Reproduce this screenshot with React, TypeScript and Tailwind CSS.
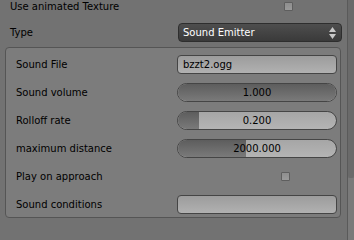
type SliderProps = {
  value: string;
  fill: number;
};

const font = { fontFamily: '"DejaVu Sans", Verdana, sans-serif' };

function Checkbox() {
  return (
    <div className="h-[9px] w-[9px] rounded-[1px] border border-[#5e5e5e] bg-gradient-to-b from-[#8e8e8e] to-[#9a9a9a]" />
  );
}

function NumSlider({ value, fill }: SliderProps) {
  return (
    <div className="relative h-[19px] w-[160px] overflow-hidden rounded-full border border-[#454545] bg-gradient-to-b from-[#a6a6a6] to-[#b4b4b4]">
      <div
        className="absolute inset-y-0 left-0 bg-gradient-to-b from-[#5d5d5d] to-[#7a7a7a]"
        style={{ width: `${fill}%` }}
      />
      <div className="relative flex h-full items-center justify-center text-[10px] leading-none text-black">
        {value}
      </div>
    </div>
  );
}

function TextField({ value }: { value: string }) {
  return (
    <div className="flex h-[19px] w-[160px] items-center rounded-[4px] border border-[#454545] bg-gradient-to-b from-[#9c9c9c] to-[#b1b1b1] pl-[5px] text-[10px] leading-none text-black">
      {value}
    </div>
  );
}

function BoxRow({ label, children }: { label: string; children: React.ReactNode }) {
  return (
    <div className="flex h-[19px] items-center">
      <div className="w-[161px] text-[10px] leading-none text-black">{label}</div>
      {children}
    </div>
  );
}

export default function App() {
  return (
    <div className="flex h-[240px] w-[354px] overflow-hidden bg-[#727272]" style={font}>
      <div className="w-[347px]">
        <div className="flex h-[14px] items-center pl-[10px]">
          <div className="w-[168px] text-[10px] leading-none text-black">Use animated Texture</div>
          <div className="ml-[106px] -mt-[1px]">
            <Checkbox />
          </div>
        </div>

        <div className="mt-[9px] flex h-[19px] items-center pl-[10px]">
          <div className="w-[168px] text-[10px] leading-none text-black">Type</div>
          <div className="flex h-[19px] w-[164px] items-center justify-between rounded-[4px] border border-[#2e2e2e] bg-gradient-to-b from-[#4e4e4e] to-[#3a3a3a] pl-[4px] pr-[5px]">
            <span className="text-[10px] leading-none text-white">Sound Emitter</span>
            <svg width="7" height="12" viewBox="0 0 7 12" className="fill-[#c8c8c8]">
              <path d="M3.5 0 L7 5 L0 5 Z" />
              <path d="M0 7 L7 7 L3.5 12 Z" />
            </svg>
          </div>
        </div>

        <div className="ml-[5px] mt-[5px] flex w-[336px] flex-col gap-[9px] rounded-[4px] border border-[#555555] bg-[#7c7c7c] pb-[3px] pl-[10px] pr-[3px] pt-[7px]">
          <BoxRow label="Sound File">
            <TextField value="bzzt2.ogg" />
          </BoxRow>
          <BoxRow label="Sound volume">
            <NumSlider value="1.000" fill={100} />
          </BoxRow>
          <BoxRow label="Rolloff rate">
            <NumSlider value="0.200" fill={13} />
          </BoxRow>
          <BoxRow label="maximum distance">
            <NumSlider value="2000.000" fill={43} />
          </BoxRow>
          <BoxRow label="Play on approach">
            <div className="ml-[104px]">
              <Checkbox />
            </div>
          </BoxRow>
          <BoxRow label="Sound conditions">
            <TextField value="" />
          </BoxRow>
        </div>
      </div>

      <div className="flex w-[7px] flex-col border-l border-[#5a5a5a]">
        <div className="h-[178px] rounded-b-[3px] bg-[#6a6a6a]" />
        <div className="flex-1 bg-[#7a7a7a]" />
      </div>
    </div>
  );
}
